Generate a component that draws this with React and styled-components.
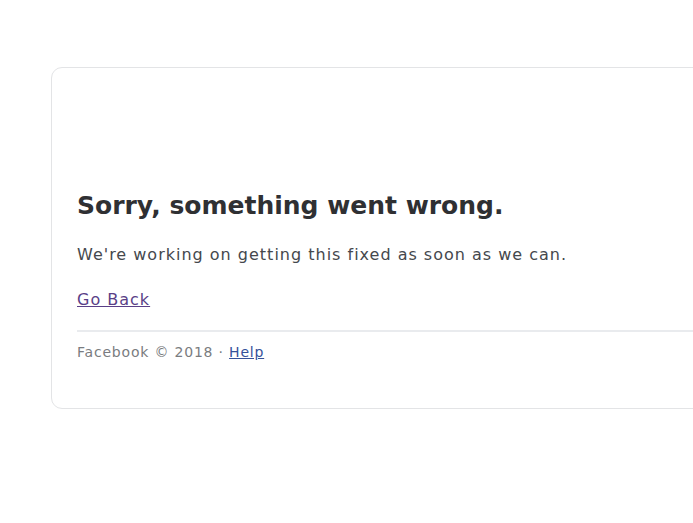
import React from 'react';
import styled, { createGlobalStyle } from 'styled-components';

const GlobalStyle = createGlobalStyle`
  html, body {
    margin: 0;
    padding: 0;
    background: #fff;
  }
  body {
    font-family: "DejaVu Sans", Verdana, sans-serif;
  }
`;

const Page = styled.div`
  width: 693px;
  height: 523px;
  overflow: hidden;
  padding: 67px 0 0 51px;
  box-sizing: border-box;
`;

const Card = styled.div`
  width: 700px;
  height: 342px;
  box-sizing: border-box;
  border: 1px solid #e3e4e6;
  border-radius: 11px;
  padding: 123px 0 0 25px;
  background: #fff;
`;

const Title = styled.h1`
  margin: 0;
  font-size: 25px;
  font-weight: 700;
  color: #2f3033;
  line-height: 30px;
`;

const Message = styled.p`
  margin: 24px 0 0;
  font-size: 16px;
  letter-spacing: 1px;
  color: #45484d;
  line-height: 20px;
`;

const BackLink = styled.a`
  display: inline-block;
  margin-top: 25px;
  font-size: 16px;
  letter-spacing: 1px;
  line-height: 20px;
  color: #5a3f87;
  text-decoration: underline;
`;

const Divider = styled.hr`
  margin: 20px 0 0;
  border: 0;
  border-top: 2px solid #e9ebee;
`;

const Footer = styled.div`
  margin-top: 11px;
  font-size: 14px;
  letter-spacing: 0.8px;
  line-height: 18px;
  color: #7a7c80;
`;

const HelpLink = styled.a`
  color: #35519a;
  text-decoration: underline;
`;

export default function App() {
  return (
    <>
      <GlobalStyle />
      <Page>
        <Card>
          <Title>Sorry, something went wrong.</Title>
          <Message>We're working on getting this fixed as soon as we can.</Message>
          <BackLink href="#">Go Back</BackLink>
          <Divider />
          <Footer>
            Facebook © 2018 · <HelpLink href="#">Help</HelpLink>
          </Footer>
        </Card>
      </Page>
    </>
  );
}
